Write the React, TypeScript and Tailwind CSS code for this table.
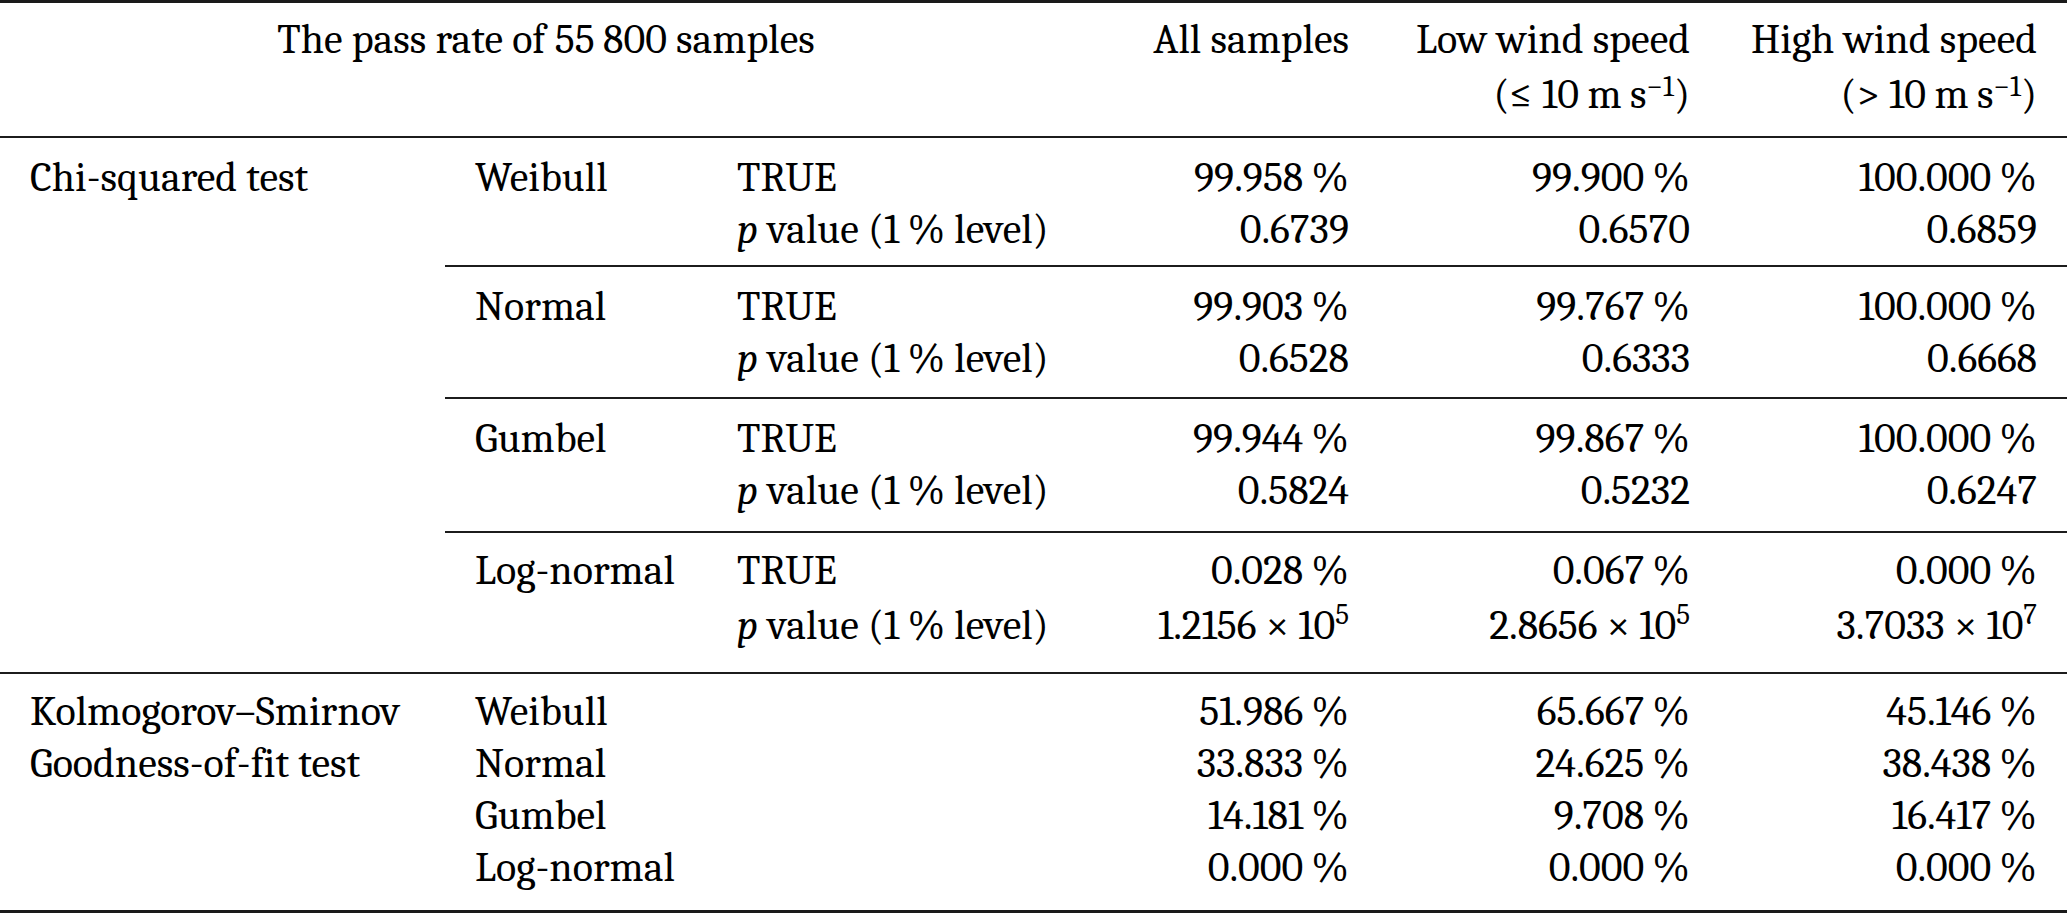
import React from "react";

type ChiGroup = {
  dist: string;
  pass: string[];
  p: { mant: string; exp?: string }[];
  pad: string;
  pLine: string;
};

const chiGroups: ChiGroup[] = [
  {
    dist: "Weibull",
    pass: ["99.958", "99.900", "100.000"],
    p: [{ mant: "0.6739" }, { mant: "0.6570" }, { mant: "0.6859" }],
    pad: "pt-[14px] pb-[9px]",
    pLine: "leading-[52px]",
  },
  {
    dist: "Normal",
    pass: ["99.903", "99.767", "100.000"],
    p: [{ mant: "0.6528" }, { mant: "0.6333" }, { mant: "0.6668" }],
    pad: "pt-[14px] pb-[12px]",
    pLine: "leading-[52px]",
  },
  {
    dist: "Gumbel",
    pass: ["99.944", "99.867", "100.000"],
    p: [{ mant: "0.5824" }, { mant: "0.5232" }, { mant: "0.6247" }],
    pad: "pt-[14px] pb-[14px]",
    pLine: "leading-[52px]",
  },
  {
    dist: "Log-normal",
    pass: ["0.028", "0.067", "0.000"],
    p: [
      { mant: "1.2156", exp: "5" },
      { mant: "2.8656", exp: "5" },
      { mant: "3.7033", exp: "7" },
    ],
    pad: "pt-[12px] pb-[18px]",
    pLine: "leading-[57px]",
  },
];

const ksRows = [
  { dist: "Weibull", vals: ["51.986", "65.667", "45.146"] },
  { dist: "Normal", vals: ["33.833", "24.625", "38.438"] },
  { dist: "Gumbel", vals: ["14.181", "9.708", "16.417"] },
  { dist: "Log-normal", vals: ["0.000", "0.000", "0.000"] },
];

const THIN = "\u2009";

function Rule({ thick }: { thick?: boolean }) {
  return <div className={thick ? "h-[3px] bg-[#1a1a1a]" : "h-[2px] bg-[#1c1c1c]"} />;
}

function Pct({ v }: { v: string }) {
  return (
    <>
      {v}
      {THIN}%
    </>
  );
}

function PValue() {
  return (
    <>
      <i>p</i> value (1{THIN}% level)
    </>
  );
}

function Unit({ op }: { op: string }) {
  return (
    <>
      ({op} 10{THIN}m{THIN}s
      <sup className="relative top-[-12px] align-baseline text-[30px] leading-none">−1</sup>)
    </>
  );
}

export default function App() {
  const cell = "px-[30px]";
  const right = "px-[30px] text-right whitespace-nowrap";
  const fullCols = "grid grid-cols-[445px_262px_385px_287px_341px_347px]";
  const subCols = "grid grid-cols-[262px_385px_287px_341px_347px]";

  return (
    <div className="w-[2067px] h-[913px] bg-white text-black text-[42px] font-serif overflow-hidden">
      <Rule thick />

      {/* header */}
      <div className={`${fullCols} pt-[9px] pb-[14px] leading-[55px]`}>
        <div className={`${cell} col-span-3 text-center whitespace-nowrap`}>
          The pass rate of 55{THIN}800 samples
        </div>
        <div className={right}>All samples</div>
        <div className={right}>
          <div>Low wind speed</div>
          <div>
            <Unit op="≤" />
          </div>
        </div>
        <div className={right}>
          <div>High wind speed</div>
          <div>
            <Unit op=">" />
          </div>
        </div>
      </div>

      <Rule />

      {/* chi-squared */}
      <div className="flex">
        <div className={`w-[445px] shrink-0 ${cell} pt-[14px] leading-[52px] whitespace-nowrap`}>
          Chi-squared test
        </div>
        <div className="w-[1622px]">
          {chiGroups.map((g, gi) => (
            <div key={g.dist}>
              {gi > 0 && <Rule />}
              <div className={`${subCols} ${g.pad}`}>
                <div className={`${cell} leading-[52px] whitespace-nowrap`}>{g.dist}</div>
                <div className="whitespace-nowrap">
                  <div className={`${cell} leading-[52px]`}>TRUE</div>
                  <div className={`${cell} ${g.pLine}`}>
                    <PValue />
                  </div>
                </div>
                {g.pass.map((v, i) => (
                  <div key={i} className={right}>
                    <div className="leading-[52px]">
                      <Pct v={v} />
                    </div>
                    <div className={g.pLine}>
                      {g.p[i].exp ? (
                        <>
                          {g.p[i].mant} × 10
                          <sup className="relative top-[-15px] align-baseline text-[29px] leading-none">
                            {g.p[i].exp}
                          </sup>
                        </>
                      ) : (
                        g.p[i].mant
                      )}
                    </div>
                  </div>
                ))}
              </div>
            </div>
          ))}
        </div>
      </div>

      <Rule />

      {/* kolmogorov-smirnov */}
      <div className={`${fullCols} pt-[12px] pb-[16px] leading-[52px]`}>
        {ksRows.map((r, ri) => (
          <React.Fragment key={r.dist}>
            <div className={`${cell} whitespace-nowrap`}>
              {ri === 0 ? "Kolmogorov–Smirnov" : ri === 1 ? "Goodness-of-fit test" : ""}
            </div>
            <div className={`${cell} whitespace-nowrap`}>{r.dist}</div>
            <div />
            {r.vals.map((v, i) => (
              <div key={i} className={right}>
                <Pct v={v} />
              </div>
            ))}
          </React.Fragment>
        ))}
      </div>

      <Rule thick />
    </div>
  );
}
